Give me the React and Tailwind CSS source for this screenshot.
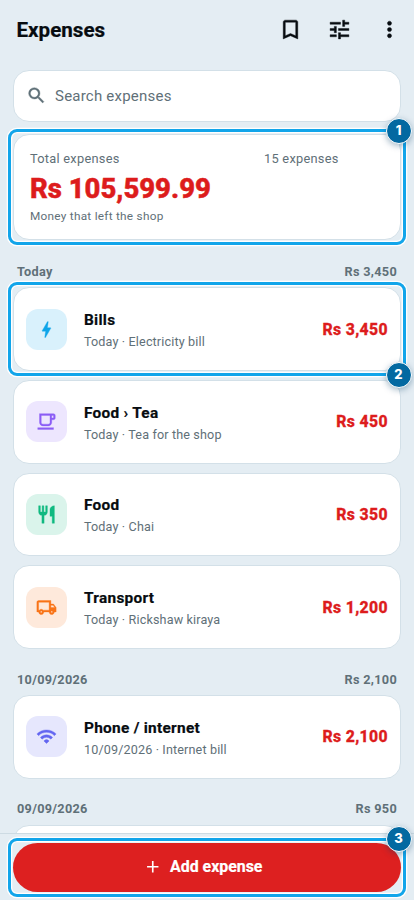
import React from "react";
import {
  MdAdd,
  MdBolt,
  MdBookmarkBorder,
  MdMoreVert,
  MdOutlineLocalCafe,
  MdOutlineLocalShipping,
  MdRestaurant,
  MdSearch,
  MdTune,
  MdWifi,
} from "react-icons/md";

const groups = [
  {
    label: "Today",
    total: "Rs 3,450",
    items: [
      { title: "Bills", note: "Today · Electricity bill", amount: "Rs 3,450", icon: MdBolt, tile: "bg-[#d9f1fc] text-[#0ea5e9]", step: 2 },
      { title: "Food › Tea", note: "Today · Tea for the shop", amount: "Rs 450", icon: MdOutlineLocalCafe, tile: "bg-[#ede6fe] text-[#8b5cf6]" },
      { title: "Food", note: "Today · Chai", amount: "Rs 350", icon: MdRestaurant, tile: "bg-[#daf4eb] text-[#10b981]" },
      { title: "Transport", note: "Today · Rickshaw kiraya", amount: "Rs 1,200", icon: MdOutlineLocalShipping, tile: "bg-[#fee9db] text-[#f97316]" },
    ],
  },
  {
    label: "10/09/2026",
    total: "Rs 2,100",
    items: [
      { title: "Phone / internet", note: "10/09/2026 · Internet bill", amount: "Rs 2,100", icon: MdWifi, tile: "bg-[#e6e7fd] text-[#6366f1]" },
    ],
  },
  {
    label: "09/09/2026",
    total: "Rs 950",
    items: [{ title: "", note: "", amount: "" }],
  },
];

// Slightly heavier icons; the empty bounding path stays unstroked
const heavy = "stroke-current stroke-[0.4] [&>path[fill=none]]:stroke-none";

const Callout = ({ step, className, badge }) => (
  <div
    className={`absolute z-10 pointer-events-none rounded-[9px] border-[3px] border-[#12a5ea] shadow-[0_0_0_1.3px_#fff,inset_0_0_0_1.3px_#fff] ${className}`}
  >
    <span
      className={`absolute flex h-[26px] w-[26px] items-center justify-center rounded-full border-[1.5px] border-white bg-[#0369a1] font-[Inter,sans-serif] text-[13px] font-extrabold text-white shadow-[0_2px_6px_rgba(3,60,100,0.35)] ${badge}`}
    >
      {step}
    </span>
  </div>
);

const ExpenseCard = ({ title, note, amount, icon: Icon, tile, step }) => (
  <div className="relative flex h-[83.7px] shrink-0 items-center rounded-[16px] border border-[#d3e0e8] bg-white pr-3 pl-3">
    {Icon && (
      <div className={`flex h-[41px] w-[41px] shrink-0 items-center justify-center rounded-[12px] ${tile}`}>
        <Icon className={`h-[21px] w-[21px] ${heavy}`} />
      </div>
    )}
    <div className="ml-[17px] flex-1 pt-[4px]">
      <p className="text-[15.4px] leading-[22px] font-bold tracking-[0.28px] text-[#070c10] [-webkit-text-stroke:0.2px]">{title}</p>
      <p className="text-[12.6px] leading-[22px] tracking-[0.14px] text-[#5f7078]">{note}</p>
    </div>
    <p className="pt-[1px] text-[15.8px] font-extrabold tracking-[0.35px] text-[#dd1c1c] [-webkit-text-stroke:0.3px]">{amount}</p>
    {step && <Callout step={step} className="-top-[6px] -right-[6px] -bottom-[6px] -left-[6px]" badge="-right-[8.5px] -bottom-[15px]" />}
  </div>
);

export default function App() {
  return (
    <div className="flex h-[900px] w-[414px] flex-col overflow-hidden bg-[#e4edf3] font-[Roboto,sans-serif] text-[#070c10]">
      {/* Header */}
      <header className="flex h-[70px] shrink-0 items-start justify-between pt-[16.5px] pr-[12.5px] pl-[16.5px]">
        <h1 className="text-[20.6px] leading-[26px] font-bold [-webkit-text-stroke:0.2px]">Expenses</h1>
        <div className="flex items-center gap-[24.5px]">
          <MdBookmarkBorder className={`h-[25px] w-[25px] ${heavy}`} />
          <MdTune className={`h-[25px] w-[25px] ${heavy}`} />
          <MdMoreVert className={`h-[25px] w-[25px] ${heavy}`} />
        </div>
      </header>

      <main className="flex min-h-0 flex-1 flex-col px-[13px]">
        {/* Search */}
        <div className="flex h-[51.5px] shrink-0 items-center rounded-[16px] border border-[#d3e0e8] bg-white pl-[12px]">
          <MdSearch className={`h-[21px] w-[21px] text-[#5f7078] ${heavy}`} />
          <span className="ml-[8px] text-[15px] tracking-[0.22px] text-[#5f7078]">Search expenses</span>
        </div>

        {/* Summary */}
        <div className="relative mt-[12.5px] h-[105.5px] shrink-0 rounded-[16px] border border-[#d3e0e8] bg-white px-4 pt-[13.5px]">
          <div className="flex text-[12.8px] leading-[20px] tracking-[0.26px] text-[#5f7078]">
            <span className="w-[234px]">Total expenses</span>
            <span>15 expenses</span>
          </div>
          <p className="mt-[4px] text-[27.5px] leading-[32px] font-extrabold text-[#dd1c1c] [-webkit-text-stroke:0.5px]">Rs 105,599.99</p>
          <p className="mt-[3.5px] text-[11.8px] leading-[16px] tracking-[0.26px] text-[#5f7078]">Money that left the shop</p>
          <Callout step={1} className="-top-[6px] -right-[6px] -bottom-[6px] -left-[6px]" badge="-top-[14px] -right-[8.5px]" />
        </div>

        {/* Expense list */}
        {groups.map((group, i) => (
          <section key={group.label} className={i === 0 ? "mt-[22.7px]" : "mt-[21px]"}>
            <div className="flex h-[25px] items-start justify-between px-1 pt-[0.6px] text-[12.7px] leading-[18px] font-bold tracking-[0.3px] text-[#5f7078]">
              <span>{group.label}</span>
              <span>{group.total}</span>
            </div>
            <div className="flex flex-col gap-[9px]">
              {group.items.map((item) => (
                <ExpenseCard key={item.title} {...item} />
              ))}
            </div>
          </section>
        ))}
      </main>

      {/* Bottom action */}
      <footer className="relative z-20 h-[67px] shrink-0 border-t border-[#cddbe3] bg-[#e4edf3] px-[13px] pt-[8.5px]">
        <button className="relative flex h-[49px] w-full items-center justify-center rounded-full bg-[#dd2020] pr-[8.5px] text-[15.9px] font-bold text-white">
          <MdAdd className="mr-[7.5px] h-[19.5px] w-[19.5px]" />
          <span className="[-webkit-text-stroke:0.2px]">Add expense</span>
          <Callout step={3} className="-top-[5px] -right-[5px] -bottom-[5px] -left-[5px]" badge="-top-[15px] -right-[8.5px]" />
        </button>
      </footer>
    </div>
  );
}
